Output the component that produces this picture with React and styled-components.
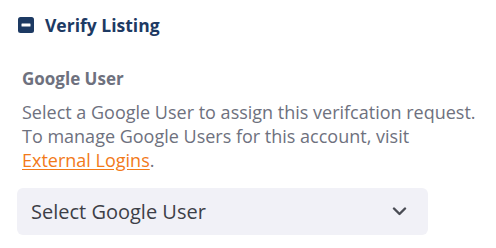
import React from 'react';
import styled, { createGlobalStyle } from 'styled-components';

const GlobalStyle = createGlobalStyle`
  body {
    margin: 0;
    background: #ffffff;
    font-family: "Open Sans", "Noto Sans", sans-serif;
  }
`;

const Panel = styled.section`
  width: 411px;
  padding: 13px 0 0 17px;
`;

const Header = styled.div`
  display: flex;
  align-items: center;
  gap: 11px;
  padding-left: 1px;
  height: 24px;
`;

const Title = styled.h2`
  margin: 0;
  font-size: 17.5px;
  line-height: 24px;
  font-weight: 700;
  color: #1d3a63;
`;

const Field = styled.div`
  margin-top: 31px;
  padding-left: 5px;
`;

const Label = styled.div`
  font-size: 17px;
  line-height: 22px;
  font-weight: 700;
  color: #6e717e;
`;

const Help = styled.p`
  margin: 10px 0 0;
  font-size: 18px;
  line-height: 24px;
  color: #6e717e;
  white-space: nowrap;
`;

const Link = styled.a`
  color: #f27a1a;
  font-weight: 500;
  text-decoration: underline;
  text-underline-offset: 2px;
`;

const SelectBox = styled.button`
  display: flex;
  align-items: center;
  justify-content: space-between;
  width: 411px;
  height: 47px;
  margin-top: 16px;
  padding: 0 21px 0 14px;
  border: none;
  border-radius: 6px;
  background: #f1f1f7;
  font-family: inherit;
  font-size: 20px;
  color: #3d3f47;
  cursor: pointer;
`;

const MinusSquare = () => (
  <svg width="16" height="16" viewBox="0 0 16 16">
    <rect x="0" y="0" width="16" height="16" rx="2.5" fill="#1d3a63" />
    <rect x="3.5" y="6.5" width="9" height="3" rx="0.5" fill="#ffffff" />
  </svg>
);

const Chevron = () => (
  <svg width="15" height="9" viewBox="0 0 15 9">
    <path d="M2 1.5 L7.5 7 L13 1.5" fill="none" stroke="#4a4c54" strokeWidth="2.4" strokeLinecap="round" strokeLinejoin="round" />
  </svg>
);

export default function App() {
  return (
    <Panel>
      <GlobalStyle />
      <Header>
        <MinusSquare />
        <Title>Verify Listing</Title>
      </Header>
      <Field>
        <Label>Google User</Label>
        <Help>
          Select a Google User to assign this verifcation request.
          <br />
          To manage Google Users for this account, visit
          <br />
          <Link href="#">External Logins</Link>.
        </Help>
      </Field>
      <SelectBox type="button">
        <span>Select Google User</span>
        <Chevron />
      </SelectBox>
    </Panel>
  );
}
